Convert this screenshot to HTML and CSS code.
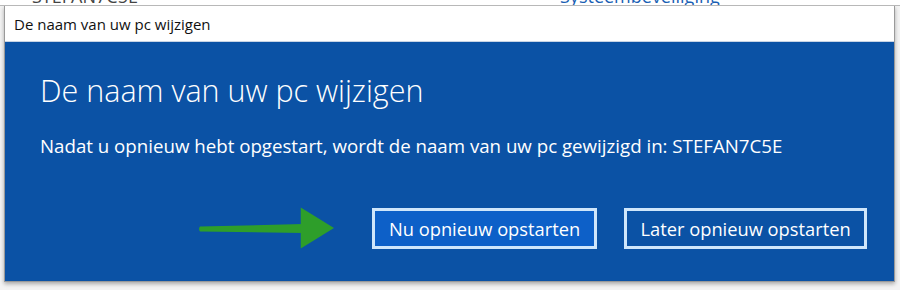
FILE: index.html
```html
<!DOCTYPE html>
<html lang="nl">
<head>
    <meta charset="UTF-8">
    <title>De naam van uw pc wijzigen</title>
    <link rel="stylesheet" href="styles.css">
</head>
<body>
    <div class="backdrop">
        <span class="bg-name">STEFAN7C5E</span>
        <span class="bg-link">Systeembeveiliging</span>
    </div>
    <div class="window">
        <div class="titlebar">De naam van uw pc wijzigen</div>
        <div class="content">
            <h1>De naam van uw pc wijzigen</h1>
            <p>Nadat u opnieuw hebt opgestart, wordt de naam van uw pc gewijzigd in: STEFAN7C5E</p>
            <div class="actions">
                <svg class="arrow" width="140" height="44" viewBox="0 0 140 44">
                    <path d="M2 20.5 Q0 23 2 25.5 L107 27 L107 18 Z" fill="#2e9e2a"/>
                    <path d="M105 1 L139 22 L105 43 Z" fill="#2e9e2a"/>
                </svg>
                <button class="btn primary">Nu opnieuw opstarten</button>
                <button class="btn later">Later opnieuw opstarten</button>
            </div>
        </div>
    </div>
</body>
</html>
```

FILE: styles.css
```css
body {
    margin: 0;
    background-color: #f3f3f3;
    font-family: "Open Sans", "Noto Sans", sans-serif;
    width: 900px;
    height: 290px;
    overflow: hidden;
}
.backdrop {
    height: 5px;
    overflow: hidden;
    background: #ffffff;
    position: relative;
    font-size: 18px;
    line-height: 18px;
    border-bottom: 1px solid #b8b8b8;
}
.backdrop span {
    position: absolute;
    top: -13px;
}
.bg-name {
    left: 32px;
    color: #444;
}
.bg-link {
    left: 560px;
    color: #1a5fb4;
}
.window {
    margin-left: 4px;
    width: 889px;
    border: 1px solid #9a9a9a;
    border-top: none;
    box-shadow: 0 2px 4px rgba(0,0,0,0.3);
}
.titlebar {
    background: #ffffff;
    height: 36px;
    line-height: 36px;
    padding-left: 9px;
    font-size: 15px;
    color: #111;
    border-bottom: 1px solid #c8d4e4;
    box-sizing: border-box;
}
.content {
    background-color: #0b52a5;
    height: 239px;
    padding: 28px 0 0 35px;
    box-sizing: border-box;
    color: #ffffff;
}
h1 {
    margin: 0;
    font-weight: 300;
    font-size: 30.5px;
    line-height: 40px;
}
p {
    margin: 23px 0 0;
    font-size: 18.7px;
    line-height: 26px;
}
.actions {
    display: flex;
    align-items: center;
    margin-top: 47px;
    padding-left: 158px;
}
.arrow {
    margin-right: 37px;
}
.btn {
    height: 41px;
    width: 230px;
    border: 3px solid #cfe6fb;
    background: transparent;
    color: #ffffff;
    font-family: inherit;
    font-size: 18.3px;
    padding: 0;
    margin-right: 27px;
}
.primary {
    background: #0d60c8;
}
.later {
    width: 248px;
}
```
